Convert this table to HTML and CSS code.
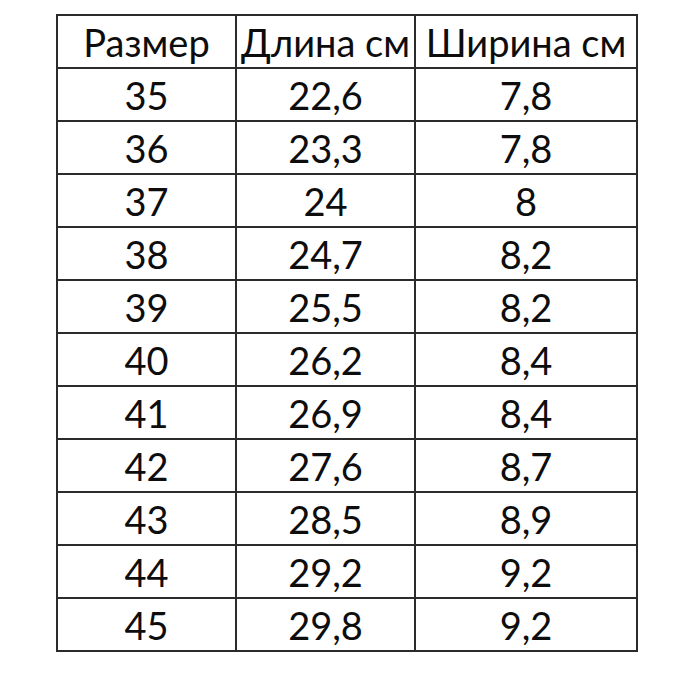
FILE: index.html
```html
<!DOCTYPE html>
<html lang="ru">
<head>
<meta charset="utf-8">
<title>Размеры</title>
<link rel="stylesheet" href="styles.css">
</head>
<body>
<div class="page">
<table class="sizes">
<colgroup><col class="c1"><col class="c2"><col class="c3"></colgroup>
<tr><td>Размер</td><td>Длина см</td><td>Ширина см</td></tr>
<tr><td>35</td><td>22,6</td><td>7,8</td></tr>
<tr><td>36</td><td>23,3</td><td>7,8</td></tr>
<tr><td>37</td><td>24</td><td>8</td></tr>
<tr><td>38</td><td>24,7</td><td>8,2</td></tr>
<tr><td>39</td><td>25,5</td><td>8,2</td></tr>
<tr><td>40</td><td>26,2</td><td>8,4</td></tr>
<tr><td>41</td><td>26,9</td><td>8,4</td></tr>
<tr><td>42</td><td>27,6</td><td>8,7</td></tr>
<tr><td>43</td><td>28,5</td><td>8,9</td></tr>
<tr><td>44</td><td>29,2</td><td>9,2</td></tr>
<tr><td>45</td><td>29,8</td><td>9,2</td></tr>
</table>
</div>
</body>
</html>
```
FILE: styles.css
```css
html, body {
  margin: 0;
  padding: 0;
  background: #ffffff;
}
.page {
  padding: 14px 0 0 56px;
}
.sizes {
  border-collapse: collapse;
  table-layout: fixed;
  width: 580px;
  font-family: Lato, "Open Sans", sans-serif;
  font-size: 38px;
  color: #0d0d0d;
}
.c1 { width: 179px; }
.c2 { width: 179px; }
.c3 { width: 222px; }
.sizes td {
  border: 2px solid #2b2b2b;
  height: 53px;
  padding: 1px 0 0 0;
  box-sizing: border-box;
  text-align: center;
  line-height: 1;
  white-space: nowrap;
}
```
